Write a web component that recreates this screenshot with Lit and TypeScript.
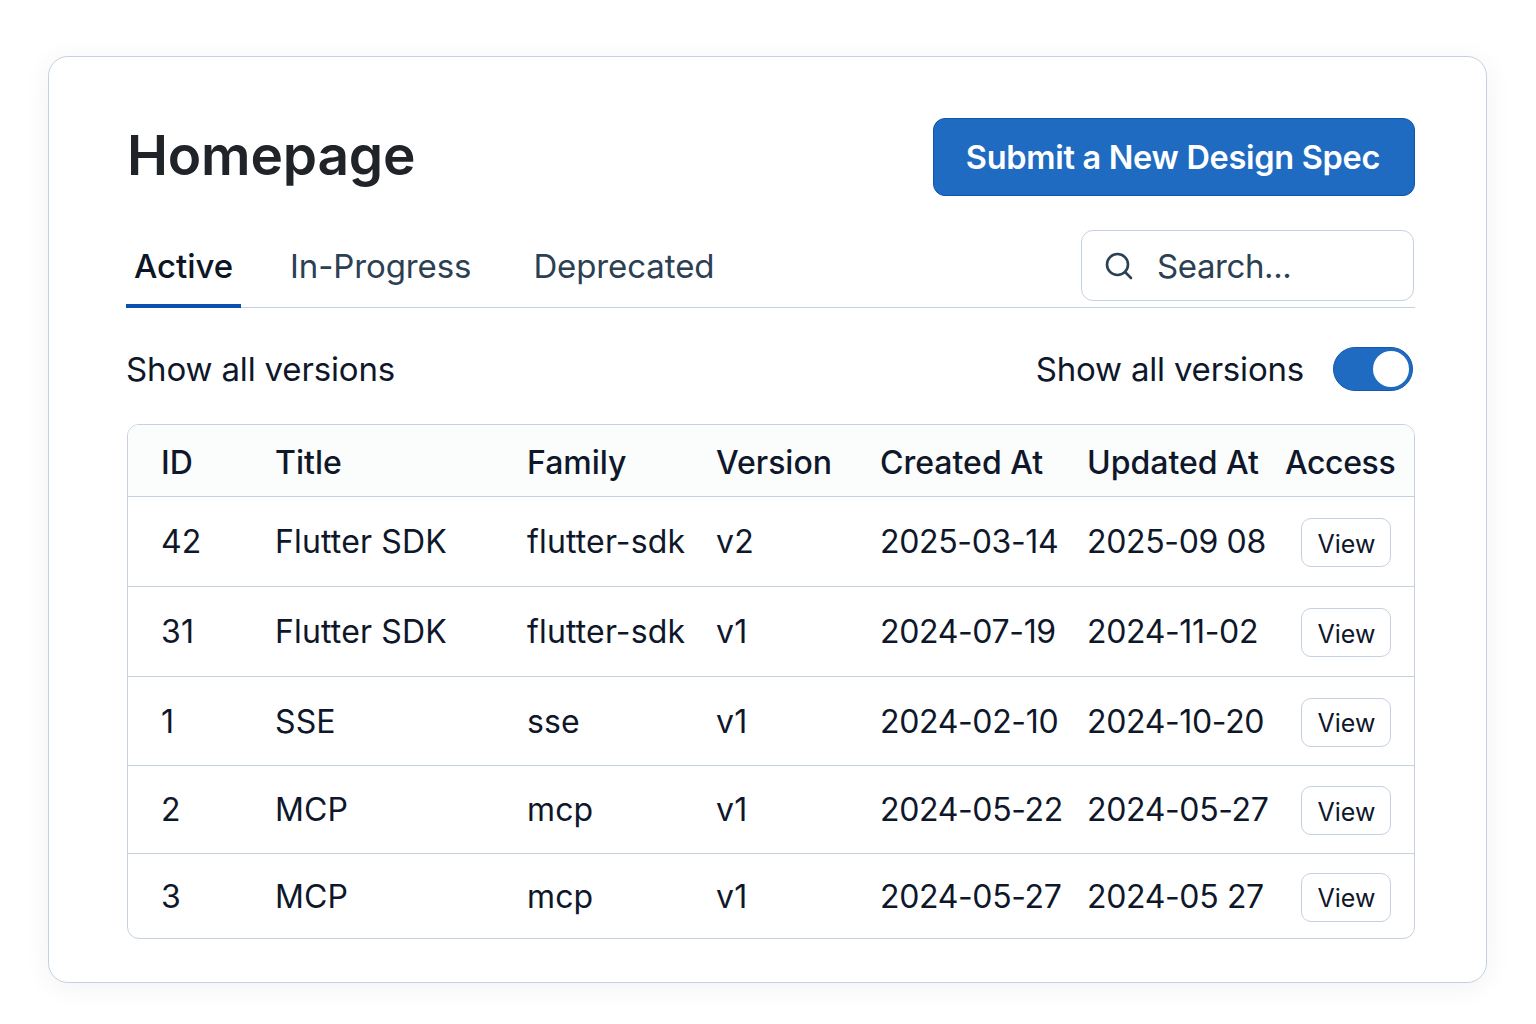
import { LitElement, html, css } from 'lit';
import { customElement } from 'lit/decorators.js';

const ROWS = [
  { id: '42', title: 'Flutter SDK', family: 'flutter-sdk', version: 'v2', created: '2025-03-14', updated: '2025-09 08', h: 90 },
  { id: '31', title: 'Flutter SDK', family: 'flutter-sdk', version: 'v1', created: '2024-07-19', updated: '2024-11-02', h: 90 },
  { id: '1', title: 'SSE', family: 'sse', version: 'v1', created: '2024-02-10', updated: '2024-10-20', h: 89 },
  { id: '2', title: 'MCP', family: 'mcp', version: 'v1', created: '2024-05-22', updated: '2024-05-27', h: 88 },
  { id: '3', title: 'MCP', family: 'mcp', version: 'v1', created: '2024-05-27', updated: '2024-05 27', h: 84 },
];

@customElement('app-root')
export class AppRoot extends LitElement {
  static styles = css`
    :host {
      display: block;
      height: 1024px;
      box-sizing: border-box;
      padding: 56px 48px 41px 48px;
      background: #ffffff;
      font-family: Inter, 'Liberation Sans', sans-serif;
      color: #0f172a;
    }
    .card {
      box-sizing: border-box;
      width: 1439px;
      height: 927px;
      padding: 61px 71px 0 78px;
      background: #fff;
      border: 1px solid #c5d1e0;
      border-radius: 20px;
      box-shadow: 0 4px 28px rgba(15, 23, 42, 0.06);
    }
    .head {
      display: flex;
      justify-content: space-between;
      align-items: center;
      height: 78px;
    }
    h1 {
      margin: -4px 0 0 0;
      font-size: 55px;
      font-weight: 600;
      color: #202327;
      letter-spacing: -0.2px;
    }
    .submit {
      box-sizing: border-box;
      width: 482px;
      height: 78px;
      padding: 0 2px 0 0;
      border: 1px solid #0f57ad;
      border-radius: 12px;
      background: #1f6bc1;
      color: #fff;
      font: 600 32.5px Inter, sans-serif;
      letter-spacing: -0.3px;
    }
    .tabs {
      display: flex;
      justify-content: space-between;
      height: 78px;
      margin-top: 34px;
      border-bottom: 1px solid #c5d1e0;
      box-sizing: border-box;
    }
    .tablist {
      display: flex;
      margin-left: -1px;
    }
    .tab {
      font-size: 33px;
      letter-spacing: -0.1px;
      color: #2c4054;
      line-height: 72px;
      height: 78px;
      box-sizing: border-box;
    }
    .tab.on {
      width: 115px;
      text-align: center;
      color: #0b1626;
      font-weight: 500;
      border-bottom: 4px solid #0b4fb0;
      margin-right: 49px;
    }
    .tab.two {
      margin-right: 62px;
    }
    .search {
      box-sizing: border-box;
      display: flex;
      align-items: center;
      width: 333px;
      height: 71px;
      margin-right: 1px;
      border: 1px solid #c5d1e0;
      border-radius: 12px;
      padding-left: 22px;
      font-size: 33px;
      letter-spacing: -0.4px;
      color: #2c4054;
      gap: 23px;
    }
    .search svg {
      width: 30px;
      height: 30px;
    }
    .filters {
      display: flex;
      justify-content: space-between;
      align-items: center;
      height: 44px;
      margin-top: 39px;
      font-size: 33px;
      letter-spacing: -0.15px;
      color: #0f172a;
    }
    .filters > span {
      margin-left: -1px;
    }
    .right {
      display: flex;
      align-items: center;
      gap: 29px;
      padding-right: 2px;
      letter-spacing: -0.2px;
    }
    .toggle {
      box-sizing: border-box;
      width: 80px;
      height: 44px;
      border-radius: 22px;
      background: #1f6bc1;
      border: 1px solid #1659ab;
      display: flex;
      justify-content: flex-end;
      align-items: center;
      padding-right: 3px;
    }
    .knob {
      width: 36px;
      height: 36px;
      border-radius: 50%;
      background: #fff;
    }
    .table {
      box-sizing: border-box;
      margin-top: 33px;
      height: 515px;
      border: 1px solid #c5d1e0;
      border-radius: 12px;
      overflow: hidden;
    }
    .row {
      box-sizing: border-box;
      display: grid;
      grid-template-columns: 114px 252px 189px 164px 207px 198px 1fr;
      align-items: center;
      padding-left: 33px;
      font-size: 32px;
      letter-spacing: 0.15px;
      border-bottom: 1px solid #c5d1e0;
      color: #0f172a;
    }
    .row:last-child {
      border-bottom: 0;
    }
    .row.top {
      height: 72px;
      padding-top: 3px;
      background: #fbfcfc;
      font-weight: 450;
      letter-spacing: 0;
    }
    .row.top .access {
      letter-spacing: -0.4px;
    }
    .date {
      letter-spacing: -0.35px;
    }
    .view {
      box-sizing: border-box;
      justify-self: end;
      margin: 2px 23px 0 0;
      padding: 2px 0 0 1px;
      width: 90px;
      height: 49px;
      background: #fff;
      border: 1px solid #c5d1e0;
      border-radius: 10px;
      font: 400 25px Inter, sans-serif;
      color: #0f172a;
    }
  `;

  render() {
    return html`
      <div class="card">
        <div class="head">
          <h1>Homepage</h1>
          <button class="submit">Submit a New Design Spec</button>
        </div>
        <div class="tabs">
          <div class="tablist">
            <div class="tab on">Active</div>
            <div class="tab two">In-Progress</div>
            <div class="tab">Deprecated</div>
          </div>
          <div class="search">
            <svg viewBox="0 0 30 30" fill="none" stroke="#2c4054" stroke-width="2.6" stroke-linecap="round">
              <circle cx="13.5" cy="13.5" r="10.5"></circle>
              <path d="M21.5 21.5 L27 27"></path>
            </svg>
            <span>Search...</span>
          </div>
        </div>
        <div class="filters">
          <span>Show all versions</span>
          <div class="right">
            <span>Show all versions</span>
            <div class="toggle"><div class="knob"></div></div>
          </div>
        </div>
        <div class="table">
          <div class="row top">
            <span>ID</span><span>Title</span><span>Family</span><span>Version</span><span>Created At</span><span>Updated At</span><span class="access">Access</span>
          </div>
          ${ROWS.map(
            r => html`
              <div class="row" style="height:${r.h}px">
                <span>${r.id}</span><span>${r.title}</span><span>${r.family}</span><span>${r.version}</span>
                <span class="date">${r.created}</span><span class="date">${r.updated}</span>
                <button class="view">View</button>
              </div>
            `
          )}
        </div>
      </div>
    `;
  }
}
